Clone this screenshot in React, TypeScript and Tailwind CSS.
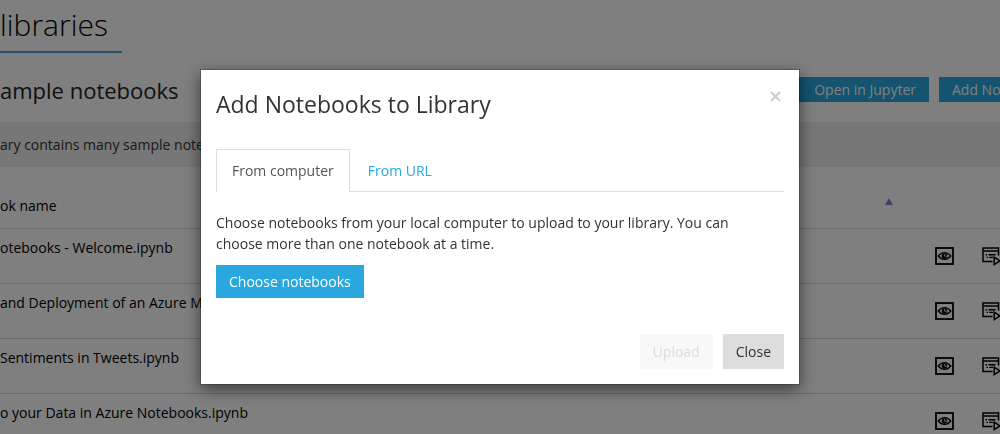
const notebooks = [
  'otebooks - Welcome.ipynb',
  'and Deployment of an Azure ML Model.ipynb',
  'Sentiments in Tweets.ipynb',
  'o your Data in Azure Notebooks.ipynb',
];

function PreviewIcon() {
  return (
    <svg width="19" height="18" viewBox="0 0 19 18" fill="none" stroke="#000" className="block" aria-hidden="true">
      <rect x="1" y="1" width="17" height="16" strokeWidth="1.800" />
      <path d="M3.200 9c2-2.400 4-3.300 6.300-3.300S13.800 6.600 15.800 9c-2 2.400-4 3.300-6.300 3.300S5.200 11.400 3.200 9z" strokeWidth="1.300" />
      <circle cx="9.500" cy="9" r="2.800" fill="#000" stroke="none" />
      <path d="M9.700 7.200v2h2" stroke="#fff" strokeWidth="0.900" />
    </svg>
  );
}

function RunIcon() {
  return (
    <svg width="20" height="20" viewBox="0 0 20 20" fill="none" stroke="#000" strokeWidth="1.500" className="block max-w-none" aria-hidden="true">
      <path d="M10.500 15.500H1V2H16.500V9.500" />
      <path d="M1 5H16.500" />
      <path d="M3.500 8.700h1.500M6.500 8.700h7M4.500 11.400h1.500M7.200 11.400h3.800" strokeWidth="1.400" />
      <path d="M12.200 11.200v7.400l5.800-3.700z" />
    </svg>
  );
}

export default function App() {
  return (
    <div className="relative h-screen overflow-hidden bg-white font-['Open_Sans','Noto_Sans',sans-serif] text-sm text-[#333]">
      <main className="flex flex-col">
        <header>
          <h1 className="inline-block h-[53px] border-b-2 border-[#4fa0d8] pr-[14px] text-[30px] leading-[50px] font-light text-black">
            libraries
          </h1>
        </header>

        <div className="flex h-[69px] items-center pt-1">
          <h2 className="grow text-[22px] leading-8 text-[#222]">ample notebooks</h2>
          <div className="flex gap-[10px] text-white">
            <button type="button" className="h-[25px] bg-[#29a8e0] pr-[13px] pl-4">
              Open in Jupyter
            </button>
            <button type="button" className="h-[25px] w-[61px] overflow-hidden bg-[#29a8e0] pl-[13px] text-left whitespace-nowrap">
              Add No
            </button>
          </div>
        </div>

        <p className="h-[45px] bg-[#eee] leading-[45px] whitespace-nowrap">ary contains many sample notebooks</p>

        <table className="w-full table-fixed border-collapse text-black">
          <colgroup>
            <col />
            <col className="w-[50px]" />
            <col className="w-[47px]" />
            <col className="w-[18px]" />
          </colgroup>
          <thead>
            <tr className="h-[61px] border-b border-[#d4d4d4]">
              <th scope="col" className="pt-[18px] text-left font-normal">
                ok name
              </th>
              <th scope="col" className="pt-2">
                <button type="button" aria-label="Sort by name" className="block">
                  <svg width="8" height="7" viewBox="0 0 8 7" className="block">
                    <path d="M4 0l4 7H0z" fill="#8080e0" />
                  </svg>
                </button>
              </th>
              <th aria-label="Preview" />
              <th aria-label="Run" />
            </tr>
          </thead>
          <tbody>
            {notebooks.map((name) => (
              <tr key={name} className="h-[55px] border-b border-[#d4d4d4]">
                <td className="pt-[9px] align-top whitespace-nowrap">
                  <a href="#notebook">{name}</a>
                </td>
                <td />
                <td className="align-middle">
                  <button type="button" aria-label={`Preview ${name}`} className="block">
                    <PreviewIcon />
                  </button>
                </td>
                <td className="overflow-hidden align-middle">
                  <button type="button" aria-label={`Run ${name}`} className="block">
                    <RunIcon />
                  </button>
                </td>
              </tr>
            ))}
          </tbody>
        </table>
      </main>

      <div className="fixed inset-0 flex items-start justify-center bg-black/50 pt-[69px]">
        <div
          role="dialog"
          aria-modal="true"
          aria-labelledby="dialog-title"
          className="w-full max-w-[600px] border border-black/20 bg-white bg-clip-padding px-[15px] shadow-[0_5px_15px_rgba(0,0,0,0.5)]"
        >
          <div className="flex h-[79px] items-start justify-between pt-[18px]">
            <h3 id="dialog-title" className="text-[23px] leading-8">
              Add Notebooks to Library
            </h3>
            <button type="button" aria-label="Close dialog" className="mt-[3px] mr-[3px] p-0 text-[#ccc]">
              <svg width="11" height="11" viewBox="0 0 11 11" stroke="currentColor" strokeWidth="2" className="block">
                <path d="M1 1l9 9M10 1l-9 9" />
              </svg>
            </button>
          </div>

          <div role="tablist" className="flex h-[43px] border-b border-[#ddd]">
            <button type="button" role="tab" aria-selected="true" className="-mb-px border border-b-0 border-[#ddd] bg-white px-[15px] text-[#555]">
              From computer
            </button>
            <button type="button" role="tab" aria-selected="false" className="border-t border-transparent px-[18px] text-[#29a8e0]">
              From URL
            </button>
          </div>

          <p className="pt-5 pr-6 leading-[21px]">
            Choose notebooks from your local computer to upload to your library. You can choose more than one notebook at
            a time.
          </p>
          <button type="button" className="mt-[11px] h-[33px] bg-[#29a8e0] px-[13px] text-white">
            Choose notebooks
          </button>

          <div className="flex justify-end gap-[10px] pt-9 pb-[15px]">
            <button type="button" disabled className="h-[35px] bg-[#f8f8f8] px-[13px] text-[#ddd]">
              Upload
            </button>
            <button type="button" className="h-[35px] bg-[#ddd] px-[13px]">
              Close
            </button>
          </div>
        </div>
      </div>
    </div>
  );
}
